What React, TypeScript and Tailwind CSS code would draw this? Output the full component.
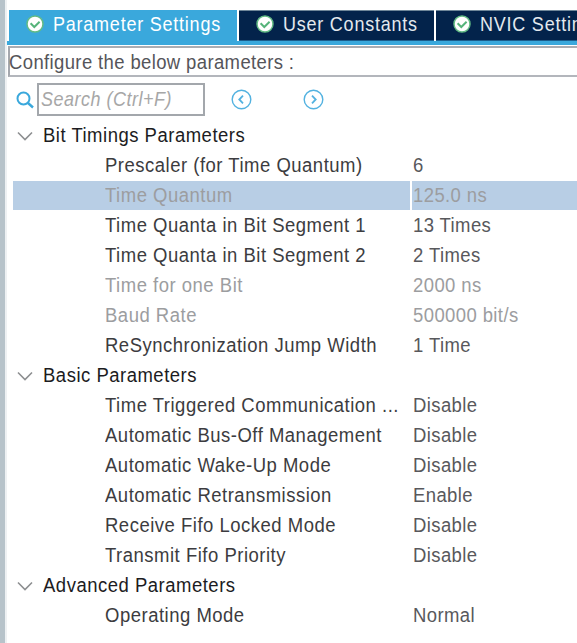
type Row = { label: string; value: string; disabled?: boolean; selected?: boolean };
type Group = { title: string; rows: Row[] };

const groups: Group[] = [
  {
    title: "Bit Timings Parameters",
    rows: [
      { label: "Prescaler (for Time Quantum)", value: "6" },
      { label: "Time Quantum", value: "125.0 ns", disabled: true, selected: true },
      { label: "Time Quanta in Bit Segment 1", value: "13 Times" },
      { label: "Time Quanta in Bit Segment 2", value: "2 Times" },
      { label: "Time for one Bit", value: "2000 ns", disabled: true },
      { label: "Baud Rate", value: "500000 bit/s", disabled: true },
      { label: "ReSynchronization Jump Width", value: "1 Time" },
    ],
  },
  {
    title: "Basic Parameters",
    rows: [
      { label: "Time Triggered Communication ...", value: "Disable" },
      { label: "Automatic Bus-Off Management", value: "Disable" },
      { label: "Automatic Wake-Up Mode", value: "Disable" },
      { label: "Automatic Retransmission", value: "Enable" },
      { label: "Receive Fifo Locked Mode", value: "Disable" },
      { label: "Transmit Fifo Priority", value: "Disable" },
    ],
  },
  { title: "Advanced Parameters", rows: [{ label: "Operating Mode", value: "Normal" }] },
];

function Check() {
  return (
    <svg className="size-[18px] shrink-0" viewBox="0 0 18 18" fill="none">
      <circle cx="9" cy="9" r="8" fill="#fff" stroke="#62bb84" strokeWidth="1.5" />
      <path d="M4.6 8.2 8.3 12l5.3-5.2" stroke="#56b47a" strokeWidth="2" />
    </svg>
  );
}

function Arrow({ d }: { d: string }) {
  return (
    <svg className="size-[21px] shrink-0" viewBox="0 0 21 21" fill="none" stroke="#53b2e0">
      <circle cx="10.5" cy="10.5" r="9.3" strokeWidth="1.4" />
      <path d={d} strokeWidth="1.8" />
    </svg>
  );
}

function Tab({ label, active }: { label: string; active?: boolean }) {
  return (
    <div
      className={
        active
          ? "flex h-[31px] w-[228px] shrink-0 items-center gap-[9px] bg-[#3aa8dc] pl-[17px] text-white"
          : "flex h-[31px] w-[195px] shrink-0 items-center gap-[9px] border-t border-b border-t-[#6f8799] border-b-[#1b5d8c] bg-[#03234b] pl-[17px] text-[#e4e9ee]"
      }
    >
      <div className="-mt-[3px]">
        <Check />
      </div>
      <span className="-mt-[3px] scale-y-110 text-[18px] tracking-[0.77px]">{label}</span>
    </div>
  );
}

export default function App() {
  return (
    <div className="flex h-[643px] w-[577px] overflow-hidden bg-white font-['Liberation_Sans',Arial,sans-serif] text-[18.5px] leading-[22px] tracking-[0.5px] whitespace-nowrap text-[#3c3c40]">
      <div className="w-[5px] shrink-0 bg-[#b7c3ca]" />
      <div className="w-[2px] shrink-0 bg-[#eef1f3]" />
      <div className="min-w-0 flex-1">
        <div className="mt-[10px] ml-[2px] flex gap-[2px]">
          <Tab label="Parameter Settings" active />
          <Tab label="User Constants" />
          <Tab label="NVIC Settings" />
        </div>
        <div className="h-1 bg-[#3aa8dc]" />
        <div className="mt-px ml-px flex h-[31px] items-center border-t-2 border-b-2 border-l-2 border-t-[#aaadb3] border-b-[#b3b6bc] border-l-[#a5a8ae] pt-[2px] text-[#55555a]">
          <span className="-ml-px scale-y-[1.08] tracking-[0.37px]">Configure the below parameters :</span>
        </div>
        <div className="mt-[6px] ml-px flex h-[33px] items-center">
          <svg className="ml-2 size-[18px]" viewBox="0 0 18 18" fill="none" stroke="#3aa8dc">
            <circle cx="7.5" cy="7.5" r="6" strokeWidth="2" />
            <path d="m12 12 5 4.5" strokeWidth="2.4" />
          </svg>
          <div className="ml-[3px] h-[33px] w-[168px] border-2 border-[#a3a7ac] pt-[4px] pl-[2px] text-[#a7a7a7] italic">
            <div className="scale-y-[1.08] text-[18px]">Search (Ctrl+F)</div>
          </div>
          <div className="ml-[26px] flex gap-[51px]">
            <Arrow d="m12 6.7-3.7 3.8 3.7 3.8" />
            <Arrow d="m9 6.7 3.7 3.8L9 14.3" />
          </div>
        </div>
        <div className="mt-[5px] ml-[6px]">
          {groups.map((g) => (
            <div key={g.title}>
              <div className="flex h-[30px] items-center text-[#1c1c22]">
                <svg className="ml-1 h-[10px] w-4" viewBox="0 0 16 10" fill="none">
                  <path d="m1 1.5 7 7 7-7" stroke="#8d8f91" strokeWidth="1.6" />
                </svg>
                <span className="-mt-px ml-[10px] scale-y-[1.08]">{g.title}</span>
              </div>
              {g.rows.map((r) => (
                <div
                  key={r.label}
                  className={r.disabled ? "flex h-[30px] gap-[2px] pb-px text-[#9c9da0]" : "flex h-[30px] gap-[2px] pb-px"}
                >
                  <div className={r.selected ? "w-[397px] bg-[#b8cee5] pt-[4px] pl-[92px]" : "w-[397px] pt-[4px] pl-[92px]"}>
                    <div className="scale-y-[1.08]">{r.label}</div>
                  </div>
                  <div
                    className={
                      (r.selected ? "flex-1 bg-[#b8cee5] pt-[4px] pl-px" : "flex-1 pt-[4px] pl-px") +
                      (r.disabled ? "" : " text-[#58585c]")
                    }
                  >
                    <div className="scale-y-[1.08] tracking-[0.4px]">{r.value}</div>
                  </div>
                </div>
              ))}
            </div>
          ))}
        </div>
      </div>
    </div>
  );
}
